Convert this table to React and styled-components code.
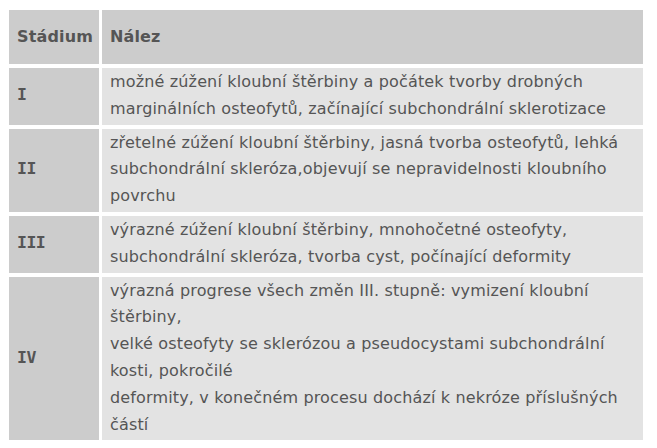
import React from 'react';
import styled, { createGlobalStyle } from 'styled-components';

const GlobalStyle = createGlobalStyle`
  html, body {
    margin: 0;
    padding: 0;
    background: #fff;
  }
  body {
    font-family: "DejaVu Sans", Verdana, sans-serif;
  }
`;

const Page = styled.div`
  width: 657px;
  height: 448px;
  overflow: hidden;
  padding: 10px 0 0 9px;
  box-sizing: border-box;
`;

const Table = styled.div`
  display: grid;
  grid-template-columns: 90px 1fr;
  column-gap: 3px;
  row-gap: 4px;
  width: 634px;
`;

const Cell = styled.div`
  display: flex;
  align-items: center;
  box-sizing: border-box;
  padding: ${({ $head }) => ($head ? '0 8px' : '1px 8px 2px')};
  min-height: ${({ $head }) => ($head ? '54px' : '0')};
  background: ${({ $dark }) => ($dark ? '#cccccc' : '#e3e3e3')};
  color: #555;
  font-size: 16px;
  letter-spacing: 0.15px;
  line-height: 26.8px;
  font-weight: ${({ $bold }) => ($bold ? 700 : 400)};
  white-space: nowrap;
`;

const Stage = styled(Cell)`
  font-family: "DejaVu Sans Mono", "Liberation Mono", monospace;
  font-size: 16.5px;
  letter-spacing: -0.5px;
`;

const rows = [
  {
    stage: 'I',
    lines: [
      'možné zúžení kloubní štěrbiny a počátek tvorby drobných',
      'marginálních osteofytů, začínající subchondrální sklerotizace',
    ],
  },
  {
    stage: 'II',
    lines: [
      'zřetelné zúžení kloubní štěrbiny, jasná tvorba osteofytů, lehká',
      'subchondrální skleróza,objevují se nepravidelnosti kloubního',
      'povrchu',
    ],
  },
  {
    stage: 'III',
    lines: [
      'výrazné zúžení kloubní štěrbiny, mnohočetné osteofyty,',
      'subchondrální skleróza, tvorba cyst, počínající deformity',
    ],
  },
  {
    stage: 'IV',
    lines: [
      'výrazná progrese všech změn III. stupně: vymizení kloubní',
      'štěrbiny,',
      'velké osteofyty se sklerózou a pseudocystami subchondrální',
      'kosti, pokročilé',
      'deformity, v konečném procesu dochází k nekróze příslušných',
      'částí',
    ],
  },
];

const App = () => {
  return (
    <>
      <GlobalStyle />
      <Page>
        <Table>
          <Cell $head $dark $bold>Stádium</Cell>
          <Cell $head $dark $bold>Nález</Cell>
          {rows.map((row) => (
            <React.Fragment key={row.stage}>
              <Stage $dark $bold>{row.stage}</Stage>
              <Cell>
                <div>
                  {row.lines.map((line, i) => (
                    <div key={i}>{line}</div>
                  ))}
                </div>
              </Cell>
            </React.Fragment>
          ))}
        </Table>
      </Page>
    </>
  );
};

export default App;
